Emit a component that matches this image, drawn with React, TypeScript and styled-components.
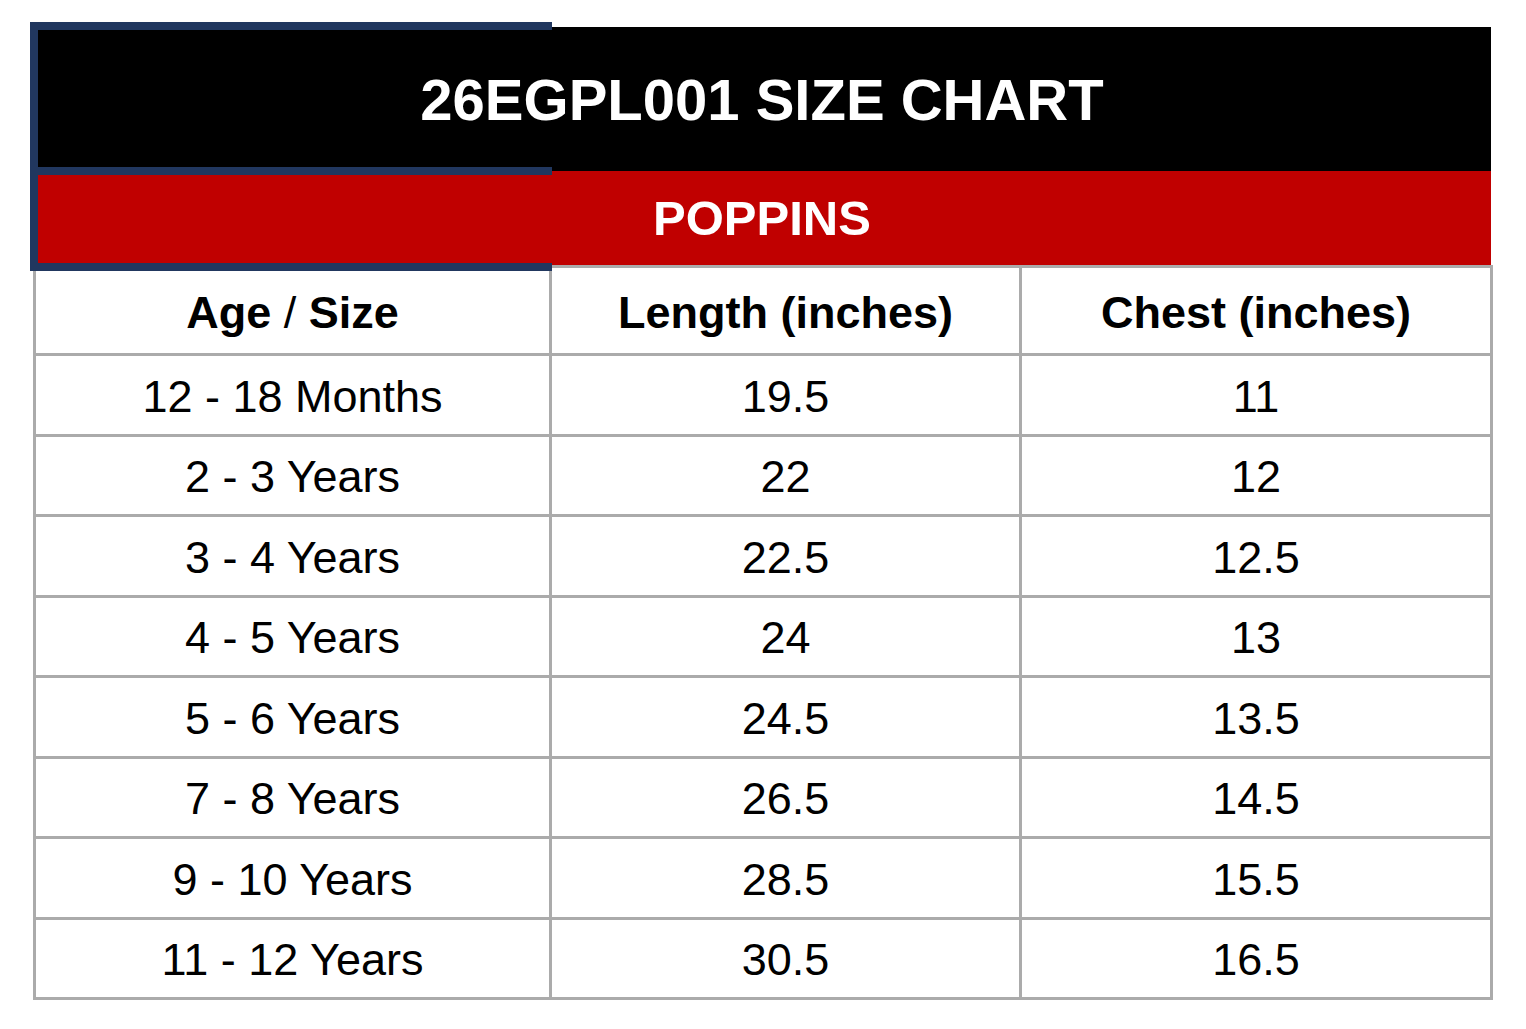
import styled, { createGlobalStyle } from "styled-components"

const GlobalStyle = createGlobalStyle`
body {
  margin: 0;
  background: #fff;
  font-family: "Liberation Sans", Arial, Helvetica, sans-serif;
}
`

const Page = styled.div`
padding: 27px 0 0 33px;
`

const Chart = styled.div`
width: 1460px;
`

const TitleBlock = styled.div`
position: relative;
width: 1458px;
`

const Band = styled.div<{ $bg: string; $h: number; $size: number }>`
display: flex;
align-items: center;
justify-content: center;
height: ${(p) => p.$h}px;
background: ${(p) => p.$bg};
color: #fff;
font-weight: 700;
font-size: ${(p) => p.$size}px;
`

// navy selection outline over the left part of the title rows
const Outline = styled.div`
position: absolute;
left: -3px;
top: -5px;
width: 522px;
height: 249px;
box-sizing: border-box;
border: 8px solid #21375f;
border-right: none;
pointer-events: none;

&::after {
  content: "";
  position: absolute;
  left: 0;
  right: 0;
  top: 137px;
  height: 8px;
  background: #21375f;
}
`

const Table = styled.div`
border: 3px solid #ababab;
`

const Row = styled.div<{ $h: number; $last?: boolean }>`
display: grid;
grid-template-columns: 516px 470px 468px;
height: ${(p) => p.$h}px;
border-bottom: ${(p) => (p.$last ? "none" : "3px solid #ababab")};
`

const Cell = styled.div<{ $head?: boolean }>`
display: flex;
align-items: center;
justify-content: center;
white-space: pre;
padding-top: 4px;
font-size: 45px;
font-weight: ${(p) => (p.$head ? 700 : 400)};
color: #000;
border-right: 3px solid #ababab;

&:last-child {
  border-right: none;
}
`

const Slash = styled.span`
font-weight: 400;
`

const rows: [string, string, string][] = [
  ["12 - 18 Months", "19.5", "11"],
  ["2 - 3 Years", "22", "12"],
  ["3 - 4 Years", "22.5", "12.5"],
  ["4 - 5 Years", "24", "13"],
  ["5 - 6 Years", "24.5", "13.5"],
  ["7 - 8 Years", "26.5", "14.5"],
  ["9 - 10 Years", "28.5", "15.5"],
  ["11 - 12 Years", "30.5", "16.5"],
]

export default function App() {
  return (
    <>
      <GlobalStyle />
      <Page>
        <Chart>
          <TitleBlock>
            <Band $bg="#000" $h={144} $size={58}>26EGPL001 SIZE CHART</Band>
            <Band $bg="#c00000" $h={94} $size={49}>POPPINS</Band>
            <Outline />
          </TitleBlock>
          <Table>
            <Row $h={85}>
              <Cell $head>Age <Slash>/</Slash> Size</Cell>
              <Cell $head>Length (inches)</Cell>
              <Cell $head>Chest (inches)</Cell>
            </Row>
            {rows.map((r, i) => (
              <Row key={r[0]} $h={77.5} $last={i === rows.length - 1}>
                <Cell>{r[0]}</Cell>
                <Cell>{r[1]}</Cell>
                <Cell>{r[2]}</Cell>
              </Row>
            ))}
          </Table>
        </Chart>
      </Page>
    </>
  )
}
